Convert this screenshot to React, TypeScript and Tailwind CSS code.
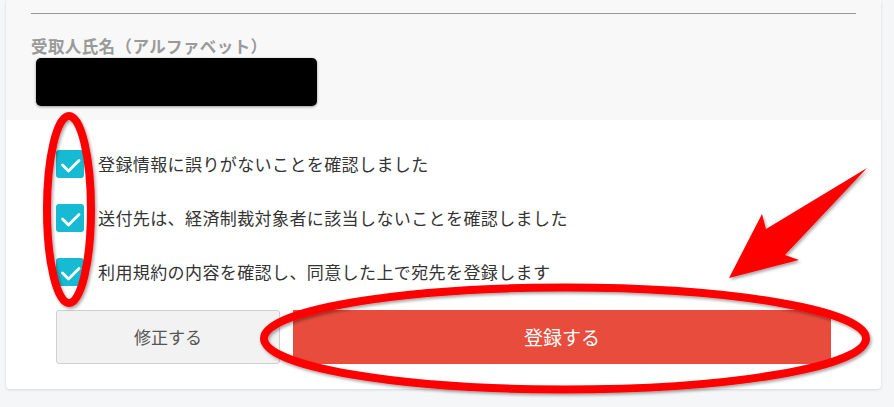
const jp = { fontFamily: '"Noto Sans CJK JP", "Noto Sans", sans-serif' };

const items = [
  '登録情報に誤りがないことを確認しました',
  '送付先は、経済制裁対象者に該当しないことを確認しました',
  '利用規約の内容を確認し、同意した上で宛先を登録します',
];

function CheckBox() {
  return (
    <span className="w-[28px] h-[28px] rounded-[3px] bg-[#17bad3] flex items-center justify-center shrink-0">
      <svg width="28" height="28" viewBox="0 0 28 28" fill="none">
        <path d="M6.5 15 L12.5 21 L23 10.5" stroke="#fff" strokeWidth="2.8" strokeLinecap="round" strokeLinejoin="round" />
      </svg>
    </span>
  );
}

// red markup drawn over the screenshot
function Annotations() {
  return (
    <svg className="absolute inset-0 pointer-events-none" width="894" height="407" viewBox="0 0 894 407">
      <defs>
        <filter id="sh" x="-10%" y="-10%" width="120%" height="130%">
          <feDropShadow dx="1.5" dy="2" stdDeviation="1.5" floodColor="#000" floodOpacity="0.35" />
        </filter>
      </defs>
      <g filter="url(#sh)">
        <ellipse cx="69" cy="209.5" rx="22" ry="93.5" fill="none" stroke="#ff0000" strokeWidth="8" />
        <ellipse cx="565" cy="338.5" rx="301" ry="51" fill="none" stroke="#ff0000" strokeWidth="8" />
        <polygon points="729,278 762,214 766,229 867,168 785,255 799,260" fill="#ff0000" />
      </g>
    </svg>
  );
}

export default function App() {
  return (
    <div className="relative w-[894px] h-[407px] overflow-hidden bg-[#f5f6f8] pl-[6px] pr-[13px]" style={jp}>
      <div className="w-full bg-white rounded-b-[4px] shadow-[0_1px_3px_rgba(0,0,0,0.12)]">
        {/* recipient summary */}
        <div className="h-[120px] bg-[#f8f8f8] px-[25px] pt-[13px]">
          <div className="border-t border-[#999]" />
          <div className="mt-[21px] text-[16.5px] leading-[22px] font-bold text-[#9a9a9a] tracking-[0.4px]">
            受取人氏名（アルファベット）
          </div>
          <div className="mt-[1px] ml-[5px] w-[281px] h-[48px] rounded-[5px] bg-black shadow-[0_1px_3px_rgba(0,0,0,0.4)]" />
        </div>

        {/* confirmations */}
        <div className="px-[50px] pt-[30px] pb-[25px]">
          <div className="flex flex-col gap-[26px]">
            {items.map((t) => (
              <label key={t} className="flex items-center gap-[14px] h-[28px]">
                <CheckBox />
                <span className="text-[17px] tracking-[0.4px] text-[#333]">{t}</span>
              </label>
            ))}
          </div>
          <div className="flex gap-[13px] mt-[24px] h-[54px]">
            <button className="w-[224px] shrink-0 rounded-[3px] border border-[#cfcfcf] bg-[#f2f2f2] text-[17px] text-[#555]">
              修正する
            </button>
            <button className="flex-1 bg-[#e74c3c] text-[19px] text-white">登録する</button>
          </div>
        </div>
      </div>
      <Annotations />
    </div>
  );
}
